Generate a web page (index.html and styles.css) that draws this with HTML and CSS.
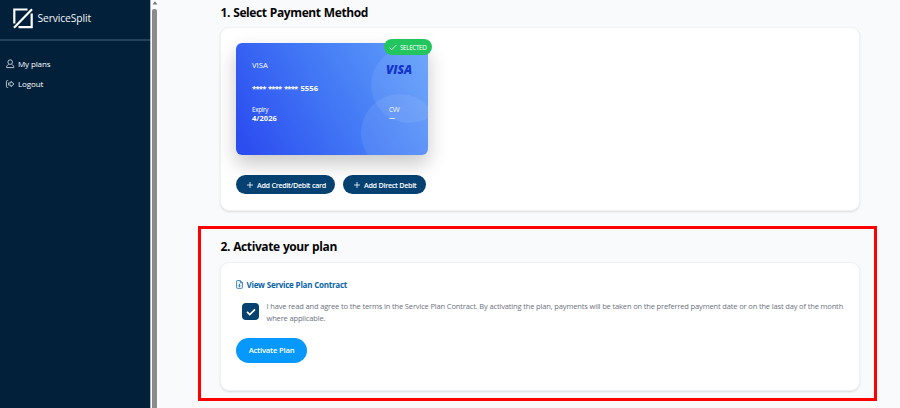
FILE: index.html
```
<!DOCTYPE html>
<html lang="en">
<head>
<meta charset="utf-8">
<title>ServiceSplit</title>
<link rel="stylesheet" href="styles.css">
</head>
<body>
<div class="app">
  <aside class="sidebar">
    <header class="brand">
      <svg class="brand-mark" viewBox="0 0 20 21" fill="none" stroke="#fff" stroke-width="2.2">
        <path d="M1.3 15.5V1.5H14.5"/><path d="M18.7 5.5v13.7H5.5"/><path d="M1 19.7L19 1.3"/>
      </svg>
      <span class="brand-name">ServiceSplit</span>
    </header>
    <nav class="nav">
      <a class="nav-item"><svg class="nav-icon" viewBox="0 0 10 10" fill="none" stroke="#c9d1d8" stroke-width=".9"><circle cx="5.2" cy="3.1" r="2.3"/><path d="M3.7 5.4C2.3 6 1.6 7 1.6 8.6H8.8C8.8 7 8.1 6 6.7 5.4"/></svg><span>My plans</span></a>
      <a class="nav-item"><svg class="nav-icon" viewBox="0 0 10 10" fill="none" stroke="#c9d1d8" stroke-width=".9"><path d="M3.2 1.5H2.6Q1.4 1.5 1.4 2.7V7.3Q1.4 8.5 2.6 8.5H3.2"/><path d="M3.6 3.9H6V2.3L9 5 6 7.7V6.1H3.6Z" stroke-linejoin="round"/></svg><span>Logout</span></a>
    </nav>
  </aside>
  <div class="scrollbar">
    <svg class="scroll-arrow" viewBox="0 0 6 4"><path d="M3 .3L5.4 3.5H.6Z" fill="#777"/></svg>
    <div class="scroll-thumb"></div>
  </div>
  <main class="main">
    <section class="step">
      <h2 class="title">1. Select Payment Method</h2>
      <div class="panel panel-method">
        <div class="card">
          <div class="card-face">
            <div class="orb orb-top"></div>
            <div class="orb orb-bottom"></div>
            <div class="card-top"><span class="card-type">VISA</span><span class="card-logo">VISA</span></div>
            <div class="card-number"><span class="mask">**** **** ****</span><span>5556</span></div>
            <div class="card-bottom">
              <div class="field"><span class="label">Expiry</span><span class="value">4/2026</span></div>
              <div class="field field-cvv"><span class="label">CVV</span><span class="value dash">—</span></div>
            </div>
          </div>
          <div class="badge"><svg class="badge-icon" viewBox="0 0 8 7" fill="none" stroke="#fff" stroke-width=".8"><path d="M.6 3.7L2.7 5.8 7.4 1"/></svg><span>SELECTED</span></div>
        </div>
        <div class="actions">
          <button class="add add-card"><svg class="plus" viewBox="0 0 6 6" stroke="#fff" stroke-width=".8"><path d="M0 3H6M3 0V6"/></svg><span>Add Credit/Debit card</span></button>
          <button class="add add-debit"><svg class="plus" viewBox="0 0 6 6" stroke="#fff" stroke-width=".8"><path d="M0 3H6M3 0V6"/></svg><span>Add Direct Debit</span></button>
        </div>
      </div>
    </section>
    <section class="step highlight">
      <h2 class="title">2. Activate your plan</h2>
      <div class="panel panel-activate">
        <a class="contract"><svg class="doc" viewBox="0 0 7 9" fill="none" stroke="#0964a8" stroke-width=".8"><path d="M1.2 .6H4.4L6.4 2.7V7.6Q6.4 8.3 5.7 8.3H1.3Q.6 8.3 .6 7.6V1.2Q.6 .6 1.2 .6ZM4.3 .8V2.8H6.2M3.5 3.7V6.7M2.2 5.5L3.5 6.8 4.8 5.5"/></svg><span>View Service Plan Contract</span></a>
        <div class="consent">
          <span class="checkbox"><svg class="check" viewBox="0 0 10 8" fill="none" stroke="#fff" stroke-width="1.7"><path d="M1 3.9L3.8 6.5 9 1.3"/></svg></span>
          <p class="terms"><span>I have read and agree to the terms in the Service Plan Contract. By activating the plan, payments will be taken on the preferred payment date or on the last day of the month</span><br><span>where applicable.</span></p>
        </div>
        <button class="activate">Activate Plan</button>
      </div>
    </section>
  </main>
</div>
</body>
</html>
```
FILE: styles.css
```
* { box-sizing: border-box; }
body { margin: 0; font-family: "Open Sans", "Noto Sans", sans-serif; background: #f9fafc; }
h2, p { margin: 0; }
svg { display: block; flex: none; }
span { white-space: nowrap; }
button { border: 0; font-family: inherit; color: #fff; }
.app { display: flex; width: 900px; height: 408px; overflow: hidden; }

.sidebar { width: 150px; background: #02203a; color: #fff; }
.brand { display: flex; height: 41px; padding: 8px 0 0 13px; border-bottom: 2px solid #26425a; }
.brand-mark { width: 20px; height: 21px; }
.brand-name { margin-left: 4.5px; font-size: 10.3px; line-height: 21px; letter-spacing: -.12px; color: #f4f6f8; }
.nav { padding: 13px 0 0 5px; }
.nav-item { display: flex; align-items: center; height: 20px; font-size: 8px; letter-spacing: -.12px; }
.nav-item span { line-height: 12px; }
.nav-icon { width: 10px; height: 10px; margin-right: 3px; }

.scrollbar { display: flex; flex-direction: column; align-items: center; width: 8px; padding-top: 1px; background: #fcfcfc; border-left: 1px solid #a9b4be; }
.scroll-arrow { width: 6px; height: 4px; margin-bottom: 4px; }
.scroll-thumb { width: 5px; flex: 1; border-radius: 2px 2px 0 0; background: #8b8b8b; }

.main { width: 742px; padding: 4px 0 0 40px; }
.step { width: 679px; padding-left: 22px; }
.title { padding-left: .5px; font-size: 12px; line-height: 17px; font-weight: 700; letter-spacing: -.4px; word-spacing: .5px; color: #050505; white-space: nowrap; }
.panel { width: 640px; border-radius: 9px; background: #fff; border: 1px solid #f0f1f3; box-shadow: 0 1px 2px #0000001f; }
.panel-method { height: 184px; margin-top: 6px; padding: 15px; }
.card { position: relative; width: 192px; height: 112px; border-radius: 6px; box-shadow: 0 9px 20px #00000038; }
.card-face { position: relative; overflow: hidden; height: 112px; padding: 18px 16px 0; border-radius: 6px; color: #fff; background: linear-gradient(60deg, #2c4df0 5%, #4278f5 50%, #5f9dfa 95%); }
.orb { position: absolute; width: 76px; height: 76px; border-radius: 50%; background: #ffffff14; }
.orb-top { left: 135px; top: 4px; }
.orb-bottom { left: 125px; top: 51px; width: 78px; height: 78px; }
.card-top { position: relative; display: flex; justify-content: space-between; height: 20px; }
.card-type { font-size: 7.7px; line-height: 9px; }
.card-logo { font-size: 12px; line-height: 17px; font-weight: 800; letter-spacing: -.1px; color: #1434cb; font-style: italic; }
.card-number { position: relative; display: flex; gap: 3px; font-size: 7.7px; line-height: 14px; font-weight: 700; }
.mask { letter-spacing: -.8px; word-spacing: 1.2px; }
.card-bottom { position: relative; display: flex; justify-content: space-between; margin-top: 10px; }
.field { display: flex; flex-direction: column; }
.field-cvv { width: 23px; }
.label { font-size: 6.3px; line-height: 9px; letter-spacing: -.3px; }
.value { font-size: 7.5px; line-height: 9px; font-weight: 700; letter-spacing: .05px; }
.dash { font-size: 6px; }
.badge { position: absolute; left: 148px; top: -4px; display: flex; align-items: center; width: 48px; height: 16px; padding-left: 5px; border-radius: 8px; background: #22c55e; color: #fff; font-size: 6.3px; letter-spacing: -.36px; }
.badge-icon { width: 8px; height: 7px; margin-right: 3px; }
.actions { display: flex; gap: 8px; margin-top: 20px; }
.add { display: flex; align-items: center; height: 19px; padding: 0 0 0 11px; border-radius: 10px; background: #054272; font-size: 7.2px; font-weight: 600; letter-spacing: -.35px; word-spacing: .4px; }
.add-card { width: 99px; }
.add-debit { width: 83px; }
.plus { width: 6px; height: 6px; margin-right: 4px; }

.highlight { height: 175px; margin-top: 15px; padding: 9px 0 0 19px; border: 3px solid #f00; }
.panel-activate { height: 129px; margin-top: 7px; padding: 15px 15px; }
.contract { display: flex; align-items: center; height: 12px; font-size: 8px; font-weight: 700; letter-spacing: -.25px; word-spacing: .2px; color: #0964a8; }
.doc { width: 7px; height: 9px; margin-right: 3.5px; }
.consent { display: flex; margin-top: 10px; padding-left: 6px; }
.checkbox { display: grid; place-items: center; width: 17px; height: 17px; margin-top: 3px; border-radius: 4px; background: #054272; }
.check { width: 10px; height: 8px; }
.terms { margin-left: 7.5px; font-size: 7.5px; line-height: 12px; color: #6b7280; letter-spacing: -.147px; }
.activate { display: block; width: 71px; height: 25px; margin-top: 14px; padding: 0; border-radius: 13px; background: #0699fb; font-size: 7.7px; font-weight: 600; letter-spacing: -.2px; line-height: 25px; }
```
